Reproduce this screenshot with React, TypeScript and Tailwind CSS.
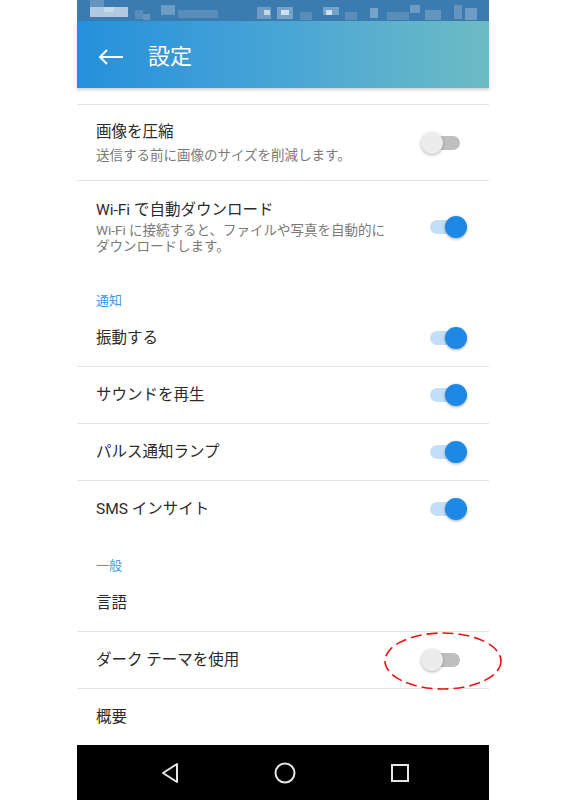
import React from 'react';

const FONT = { fontFamily: 'Roboto, "Noto Sans CJK JP", "Noto Sans", sans-serif' };

// blurred status bar: a few pixel blocks
const STATUS_BLOCKS: [number, number, number, number, number][] = [
  [13, 0, 14, 7, 0.2],
  [13, 7, 38, 10, 0.6],
  [27, 7, 10, 5, 0.3],
  [58, 10, 8, 9, 0.15],
  [66, 14, 7, 6, 0.2],
  [84, 5, 14, 10, 0.25],
  [101, 10, 40, 8, 0.15],
  [180, 7, 14, 12, 0.25],
  [187, 10, 6, 5, 0.6],
  [200, 7, 16, 12, 0.3],
  [204, 10, 8, 5, 0.65],
  [223, 12, 12, 8, 0.15],
  [246, 7, 16, 8, 0.3],
  [249, 10, 6, 5, 0.65],
  [268, 12, 12, 8, 0.15],
  [293, 8, 8, 10, 0.3],
  [310, 12, 22, 8, 0.15],
  [333, 5, 10, 8, 0.25],
  [348, 10, 16, 10, 0.2],
  [377, 5, 8, 14, 0.2],
  [388, 8, 12, 12, 0.25],
];

function StatusBar() {
  return (
    <svg width="412" height="21" viewBox="0 0 412 21" className="block shrink-0">
      <rect width="412" height="21" fill="#3c7bb0" />
      {STATUS_BLOCKS.map(([x, y, w, h, o], i) => (
        <rect key={i} x={x} y={y} width={w} height={h} fill="#ffffff" opacity={o} />
      ))}
    </svg>
  );
}

function Toggle({ on }: { on: boolean }) {
  return (
    <div className="relative w-[46px] h-[22px] shrink-0">
      <div
        className={
          on
            ? 'absolute left-[9px] top-[4px] w-[30px] h-[14px] rounded-full bg-[#c3dff7]'
            : 'absolute left-[9px] top-[4px] w-[30px] h-[14px] rounded-full bg-[#bfbfbf]'
        }
      />
      <div
        className={
          on
            ? 'absolute left-[24px] top-0 w-[22px] h-[22px] rounded-full bg-[#1e88e5] shadow-[0_1px_3px_rgba(0,0,0,0.35)]'
            : 'absolute left-0 top-0 w-[22px] h-[22px] rounded-full bg-[#ececec] shadow-[0_1px_3px_rgba(0,0,0,0.3)]'
        }
      />
    </div>
  );
}

function Divider() {
  return <div className="h-px bg-[#e4e4e4] shrink-0" />;
}

function Row({ title, sub, on, h }: { title: string; sub?: React.ReactNode; on?: boolean; h: string }) {
  return (
    <div className={`${h} shrink-0 flex items-center pl-[19px] pr-[22px]`}>
      <div className="flex-1 flex flex-col justify-center">
        <div className="text-[15.5px] leading-[20px] text-[#2b2b2b]">{title}</div>
        {sub}
      </div>
      {on !== undefined && <Toggle on={on} />}
    </div>
  );
}

function Category({ label }: { label: string }) {
  return (
    <div className="h-[38px] shrink-0 pl-[19px] pt-[21px] text-[13px] leading-[16px] text-[#3a9be6]">{label}</div>
  );
}

export default function App() {
  return (
    <div className="min-h-screen bg-white flex justify-center" style={FONT}>
      <div className="relative w-[412px] h-[800px] flex flex-col bg-white">
        <StatusBar />
        <header className="relative z-10 h-[67px] shrink-0 flex items-center pl-[21px] pt-[5px] bg-gradient-to-r from-[#2490dc] via-[#48a5d5] to-[#6dbbc4] shadow-[0_2px_3px_rgba(0,0,0,0.18)]">
          <svg width="26" height="16" viewBox="0 0 26 16" fill="none" stroke="#ffffff" strokeWidth="2">
            <path d="M25 8H2M9 1L2 8l7 7" />
          </svg>
          <h1 className="ml-[24px] text-[22px] leading-[28px] text-white">設定</h1>
        </header>

        <main className="flex-1 flex flex-col overflow-hidden">
          <div className="h-[16px] shrink-0" />
          <Divider />
          <Row
            h="h-[75px]"
            title="画像を圧縮"
            on={false}
            sub={<div className="mt-[4px] text-[13.5px] leading-[18px] text-[#7a7a7a]">送信する前に画像のサイズを削減します。</div>}
          />
          <Divider />
          <Row
            h="h-[91px]"
            title="Wi-Fi で自動ダウンロード"
            on={true}
            sub={
              <div className="mt-[2px] text-[13.5px] leading-[16px] text-[#7a7a7a]">
                Wi-Fi に接続すると、ファイルや写真を自動的に
                <br />
                ダウンロードします。
              </div>
            }
          />
          <Category label="通知" />
          <Row h="h-[56px]" title="振動する" on={true} />
          <Divider />
          <Row h="h-[56px]" title="サウンドを再生" on={true} />
          <Divider />
          <Row h="h-[56px]" title="パルス通知ランプ" on={true} />
          <Divider />
          <Row h="h-[56px]" title="SMS インサイト" on={true} />
          <Category label="一般" />
          <Row h="h-[56px]" title="言語" />
          <Divider />
          <Row h="h-[56px]" title="ダーク テーマを使用" on={false} />
          <Divider />
          <Row h="h-[56px]" title="概要" />
        </main>

        <nav className="h-[55px] shrink-0 bg-black flex items-center pl-[35px]">
          <div className="w-[115px] flex justify-center">
            <svg width="20" height="22" viewBox="0 0 20 22" fill="none" stroke="#e6e6e6" strokeWidth="2" strokeLinejoin="round">
              <path d="M17 2L3 11l14 9z" />
            </svg>
          </div>
          <div className="w-[115px] flex justify-center">
            <svg width="24" height="24" viewBox="0 0 24 24" fill="none" stroke="#e6e6e6" strokeWidth="2">
              <circle cx="12" cy="12" r="9.5" />
            </svg>
          </div>
          <div className="w-[115px] flex justify-center">
            <svg width="20" height="20" viewBox="0 0 20 20" fill="none" stroke="#e6e6e6" strokeWidth="2">
              <rect x="2" y="2" width="16" height="16" />
            </svg>
          </div>
        </nav>

        {/* highlight marker */}
        <svg className="absolute left-[306px] top-[631px] pointer-events-none" width="120" height="60" viewBox="0 0 120 60" fill="none">
          <ellipse cx="60" cy="30" rx="58" ry="28" stroke="#ee1111" strokeWidth="1.6" strokeDasharray="11 5" />
        </svg>
      </div>
    </div>
  );
}
